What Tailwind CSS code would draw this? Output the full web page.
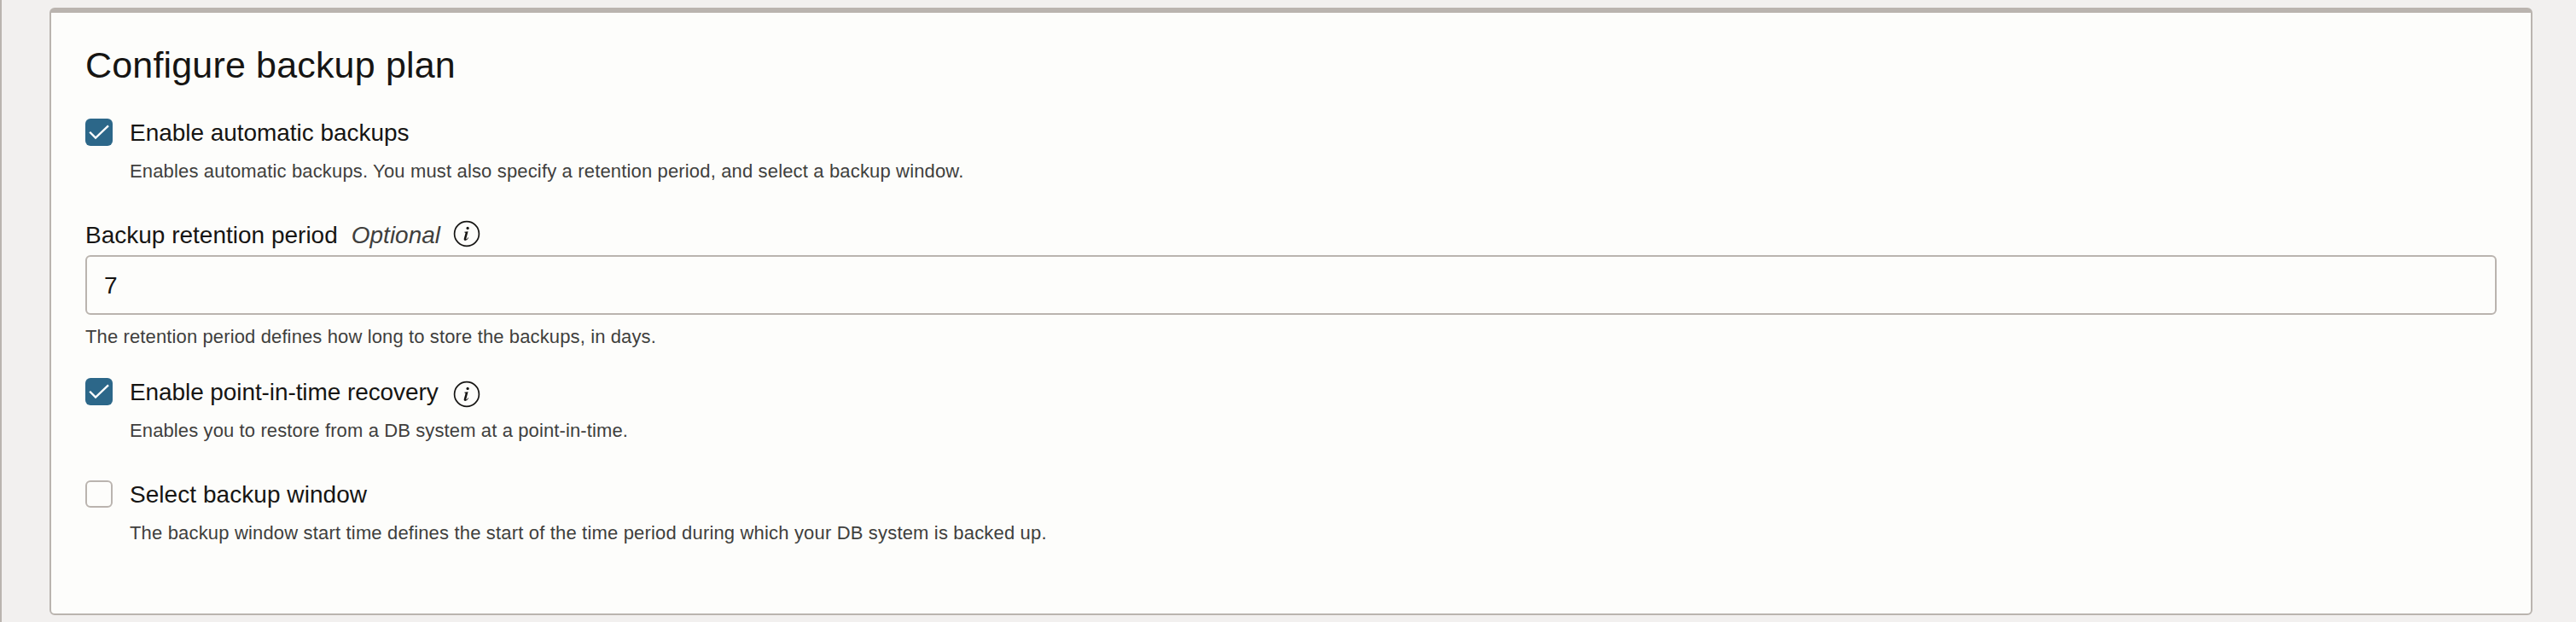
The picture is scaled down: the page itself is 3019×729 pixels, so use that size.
<!DOCTYPE html>
<html lang="en">
<head>
<meta charset="utf-8">
<title>Configure backup plan</title>
<script src="https://cdn.jsdelivr.net/npm/@tailwindcss/browser@4"></script>
</head>
<body class="w-[3019px] h-[729px] overflow-hidden bg-[#f2f0ef] border-l-2 border-[#bab4af] pt-[9px] pl-14 font-['Liberation_Sans',Arial,sans-serif] text-[#161513]">
<main class="w-[2910px] h-[712px] rounded-md border-2 border-t-6 border-[#bab4af] bg-[#fdfdfb] pt-[35px] px-10">
  <h1 class="h-[52px] leading-[52px] text-[43px] tracking-[0.17px] whitespace-nowrap">Configure backup plan</h1>

  <section class="mt-[37px] flex gap-5">
    <span class="size-8 shrink-0 rounded-md bg-[#2c6789]">
      <svg class="size-8" viewBox="0 0 32 32" fill="none" stroke="#fff" stroke-width="2.3"><path d="M5.2 15.8 12 22.6 27 8.3"/></svg>
    </span>
    <div class="whitespace-nowrap">
      <div class="h-8 leading-[34px] text-[28px] tracking-[-0.04px]">Enable automatic backups</div>
      <p class="mt-[15px] h-7 leading-[30px] text-[22px] tracking-[0.156px] text-[#403f3d]">Enables automatic backups. You must also specify a retention period, and select a backup window.</p>
    </div>
  </section>

  <section class="mt-[45px] whitespace-nowrap">
    <div class="flex h-8 leading-[34px] text-[28px]">
      <span>Backup retention period</span>
      <span class="ml-4 italic text-[#403f3d]">Optional</span>
      <svg class="ml-[15px] -mt-px size-8" viewBox="0 0 32 32"><circle cx="16" cy="16" r="14.4" fill="none" stroke="#161513" stroke-width="1.7"/><path d="M13.2 13.8 17.6 13.2 15.4 21.4q-.3 1.2.5.8.8-.5 1.7-1.9l.6.4q-1.9 3.2-3.9 3.2-2.1 0-1.5-2.3l1.7-6.4q.2-.7-1-.7z" fill="#161513"/><circle cx="17.1" cy="9.4" r="1.6" fill="#161513"/></svg>
    </div>
    <div class="mt-2 h-[70px] rounded-md border-2 border-[#bab4af] px-5 leading-[68px] text-[28px]">7</div>
    <p class="mt-[11px] h-7 leading-[30px] text-[22px] tracking-[0.126px] text-[#403f3d]">The retention period defines how long to store the backups, in days.</p>
  </section>

  <section class="mt-[35px] flex gap-5">
    <span class="size-8 shrink-0 rounded-md bg-[#2c6789]">
      <svg class="size-8" viewBox="0 0 32 32" fill="none" stroke="#fff" stroke-width="2.3"><path d="M5.2 15.8 12 22.6 27 8.3"/></svg>
    </span>
    <div class="whitespace-nowrap">
      <div class="flex h-8 leading-[34px] text-[28px]">
        <span class="tracking-[-0.09px]">Enable point-in-time recovery</span>
        <svg class="ml-[17px] mt-[3px] size-8" viewBox="0 0 32 32"><circle cx="16" cy="16" r="14.4" fill="none" stroke="#161513" stroke-width="1.7"/><path d="M13.2 13.8 17.6 13.2 15.4 21.4q-.3 1.2.5.8.8-.5 1.7-1.9l.6.4q-1.9 3.2-3.9 3.2-2.1 0-1.5-2.3l1.7-6.4q.2-.7-1-.7z" fill="#161513"/><circle cx="17.1" cy="9.4" r="1.6" fill="#161513"/></svg>
      </div>
      <p class="mt-[15px] h-7 leading-[30px] text-[22px] tracking-[0.117px] text-[#403f3d]">Enables you to restore from a DB system at a point-in-time.</p>
    </div>
  </section>

  <section class="mt-[45px] flex gap-5">
    <span class="size-8 shrink-0 rounded-md border-2 border-[#bab4af]"></span>
    <div class="whitespace-nowrap">
      <div class="h-8 leading-[34px] text-[28px] tracking-[0.05px]">Select backup window</div>
      <p class="mt-[15px] h-7 leading-[30px] text-[22px] tracking-[0.17px] text-[#403f3d]">The backup window start time defines the start of the time period during which your DB system is backed up.</p>
    </div>
  </section>
</main>
</body>
</html>
